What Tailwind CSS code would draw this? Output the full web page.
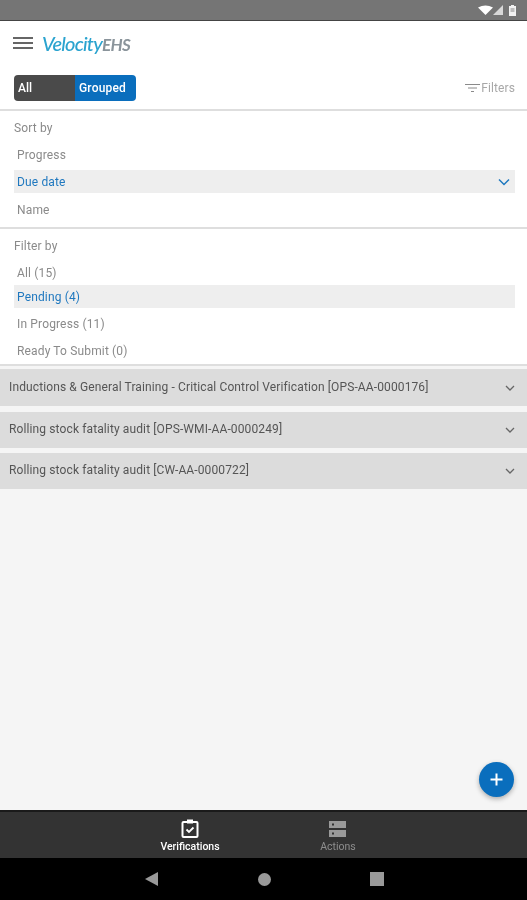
<!DOCTYPE html>
<html><head><meta charset="utf-8">
<script src="https://cdn.jsdelivr.net/npm/@tailwindcss/browser@4"></script>
</head>
<body class="m-0">
<div class="w-[527px] h-[900px] flex flex-col overflow-hidden bg-[#f5f5f5] font-['Roboto',sans-serif] blur-[0.5px] relative">
  <!-- status bar -->
  <div class="h-[21px] shrink-0 bg-[#757575] border-b border-[#444] flex items-center justify-end pr-[11px] gap-[6px]">
    <div class="flex items-center">
      <svg width="15" height="10" viewBox="0 0 15 10"><path d="M0 2.5Q7.5-1.5 15 2.5L7.5 10Z" fill="#fff"/></svg>
      <svg width="11" height="10" viewBox="0 0 11 10" class="-ml-[1px]"><path d="M11 0V10H1Z" fill="#d8d8d8"/></svg>
    </div>
    <svg width="7" height="11" viewBox="0 0 7 11"><path d="M2 0H5V1H7V11H0V1H2Z" fill="#f2f2f2"/><rect x="1.5" y="3" width="4" height="4" fill="#bdbdbd"/></svg>
  </div>
  <!-- header -->
  <div class="bg-white shrink-0">
    <div class="h-[44px] flex items-center pl-[13px]">
      <div class="flex flex-col gap-[3px] w-[20px]">
        <div class="h-[2px] bg-[#666]"></div><div class="h-[2px] bg-[#666]"></div><div class="h-[2px] bg-[#666]"></div>
      </div>
      <div class="ml-[9px] flex items-baseline italic leading-none -mt-[1px] font-['Lato',sans-serif]">
        <span class="text-[#2aa3cf] text-[20px] font-medium tracking-[-0.8px]">Velocity</span><span class="text-[#8a949b] text-[17px] font-bold tracking-[-0.7px]">EHS</span>
      </div>
    </div>
    <div class="h-[46px] flex items-start justify-between pt-[10px] pl-[14px] pr-[12px] border-b-2 border-[#dedede]">
      <div class="flex h-[26px] w-[122px] rounded-[4px] overflow-hidden text-[12px] font-medium text-white">
        <div class="w-[61px] bg-[#4a4a4a] flex items-center pl-[4px]">All</div>
        <div class="flex-1 bg-[#0a6ebd] flex items-center pl-[4px] tracking-[0.2px]">Grouped</div>
      </div>
      <div class="flex items-center gap-[1px] text-[12px] tracking-[0.1px] text-[#a8a8a8] h-[26px]">
        <svg width="15" height="10" viewBox="0 0 15 10" fill="none" stroke="#8a8a8a"><path d="M0 1.5H15M3 5H12M6 8.5H9"/></svg>
        <span>Filters</span>
      </div>
    </div>
    <!-- sort by -->
    <div class="h-[118px] border-b-2 border-[#dedede] pt-[7px] pl-[14px] pr-[12px] text-[12px] tracking-[0.15px]">
      <div class="h-[20px] flex items-center text-[#8a8a8a]">Sort by</div>
      <div class="h-[32px] pt-[2px] flex items-center pl-[3px] text-[#8a8a8a]">Progress</div>
      <div class="h-[23px] flex items-center justify-between pl-[3px] pr-[5px] bg-[#eeeeee] text-[#1f78bf]">
        <span>Due date</span>
        <svg width="12" height="8" viewBox="0 0 12 8" fill="none" stroke="#1f78bf" stroke-width="1.5"><path d="M1 1.5L6 6.5L11 1.5"/></svg>
      </div>
      <div class="h-[33px] flex items-center pl-[3px] text-[#8a8a8a]">Name</div>
    </div>
    <!-- filter by -->
    <div class="h-[137px] border-b-2 border-[#dedede] pt-[7px] pl-[14px] pr-[12px] text-[12px] tracking-[0.15px]">
      <div class="h-[20px] flex items-center text-[#8a8a8a]">Filter by</div>
      <div class="h-[29px] pt-[5px] flex items-center pl-[3px] text-[#8a8a8a]">All (15)</div>
      <div class="h-[23px] flex items-center pl-[3px] bg-[#eeeeee] text-[#1f78bf]">Pending (4)</div>
      <div class="h-[32px] flex items-center pl-[3px] text-[#8a8a8a]">In Progress (11)</div>
      <div class="h-[22px] flex items-center pl-[3px] text-[#8a8a8a]">Ready To Submit (0)</div>
    </div>
  </div>
  <!-- groups -->
  <div class="flex-1 pt-[3px] flex flex-col gap-[5px] text-[12px] tracking-[0.12px] text-[#555]">
    <div class="h-[37px] bg-[#dcdcdc] flex items-center justify-between pl-[9px] pr-[12px]">
      <span class="-mt-[2px]">Inductions &amp; General Training - Critical Control Verification [OPS-AA-0000176]</span>
      <svg width="10" height="6" viewBox="0 0 10 6" fill="none" stroke="#666" stroke-width="1.3"><path d="M1 1L5 5L9 1"/></svg>
    </div>
    <div class="h-[36px] mt-[1px] bg-[#dcdcdc] flex items-center justify-between pl-[9px] pr-[12px]">
      <span class="-mt-[3px]">Rolling stock fatality audit [OPS-WMI-AA-0000249]</span>
      <svg width="10" height="6" viewBox="0 0 10 6" fill="none" stroke="#666" stroke-width="1.3"><path d="M1 1L5 5L9 1"/></svg>
    </div>
    <div class="h-[36px] bg-[#dcdcdc] flex items-center justify-between pl-[9px] pr-[12px]">
      <span class="-mt-[2px]">Rolling stock fatality audit [CW-AA-0000722]</span>
      <svg width="10" height="6" viewBox="0 0 10 6" fill="none" stroke="#666" stroke-width="1.3"><path d="M1 1L5 5L9 1"/></svg>
    </div>
  </div>
  <!-- FAB -->
  <div class="absolute left-[479px] top-[762px] w-[35px] h-[35px] rounded-full bg-[#0a6ebd] shadow-[0_2px_5px_rgba(0,0,0,0.3)] flex items-center justify-center">
    <svg width="13" height="13" viewBox="0 0 13 13" fill="none" stroke="#fff" stroke-width="2"><path d="M6.5 0.5V12.5M0.5 6.5H12.5"/></svg>
  </div>
  <!-- bottom nav -->
  <div class="h-[48px] shrink-0 bg-[#333333] border-t-2 border-[#1a1a1a] flex pl-[116px] text-[10.5px]">
    <div class="w-[148px] flex flex-col items-center">
      <svg width="20" height="20" viewBox="0 0 20 20" class="mt-[6px]" fill="none"><rect x="2.5" y="4" width="15" height="15" rx="1" stroke="#fff" stroke-width="2"/><rect x="7" y="1.5" width="6" height="4" fill="#fff"/><path d="M6.5 11.5L9 14L13.5 9.5" stroke="#fff" stroke-width="1.8"/></svg>
      <span class="text-white font-medium leading-[13px] mt-[2px]">Verifications</span>
    </div>
    <div class="w-[148px] flex flex-col items-center">
      <svg width="20" height="18" viewBox="0 0 20 18" class="mt-[8px]"><rect x="1" y="1" width="17" height="7" fill="#9a9a9a"/><rect x="1" y="10" width="17" height="7" fill="#9a9a9a"/><rect x="4" y="3.5" width="2" height="2" fill="#333"/><rect x="4" y="12.5" width="2" height="2" fill="#333"/></svg>
      <span class="text-[#8e8e8e] leading-[13px] mt-[2px]">Actions</span>
    </div>
  </div>
  <!-- android nav -->
  <div class="h-[42px] shrink-0 bg-black flex items-center">
    <div class="w-[527px] flex items-center justify-between pl-[145px] pr-[143px]">
      <svg width="13" height="14" viewBox="0 0 13 14"><path d="M13 0V14L0 7Z" fill="#999"/></svg>
      <div class="w-[13px] h-[13px] rounded-full bg-[#999]"></div>
      <div class="w-[14px] h-[14px] bg-[#999]"></div>
    </div>
  </div>
</div>
</body></html>
